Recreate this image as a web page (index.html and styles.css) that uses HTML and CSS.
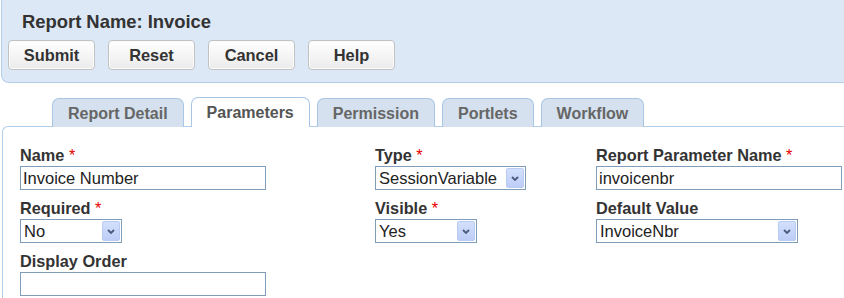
FILE: index.html
```html
<!DOCTYPE html>
<html>
<head>
<meta charset="utf-8">
<title>Report Name: Invoice</title>
<link rel="stylesheet" href="styles.css">
</head>
<body>
<div class="header">
  <h1 class="title">Report Name: Invoice</h1>
  <div class="actions">
    <button class="btn">Submit</button>
    <button class="btn">Reset</button>
    <button class="btn">Cancel</button>
    <button class="btn">Help</button>
  </div>
</div>
<div class="tabs">
  <div class="tab">Report Detail</div>
  <div class="tab active">Parameters</div>
  <div class="tab">Permission</div>
  <div class="tab">Portlets</div>
  <div class="tab">Workflow</div>
</div>
<div class="panel">
  <div class="form">
    <div class="field">
      <div class="label">Name <span class="req">*</span></div>
      <input class="text w246" type="text" value="Invoice Number">
    </div>
    <div class="field">
      <div class="label">Type <span class="req">*</span></div>
      <div class="select w151"><span class="select-value">SessionVariable</span><span class="select-arrow"><svg width="8" height="5" viewBox="0 0 8 5"><polyline points="1,1 4,4 7,1" fill="none" stroke="#4a5b7e" stroke-width="1.8"/></svg></span></div>
    </div>
    <div class="field">
      <div class="label">Report Parameter Name <span class="req">*</span></div>
      <input class="text w246" type="text" value="invoicenbr">
    </div>
    <div class="field">
      <div class="label">Required <span class="req">*</span></div>
      <div class="select w102"><span class="select-value">No</span><span class="select-arrow"><svg width="8" height="5" viewBox="0 0 8 5"><polyline points="1,1 4,4 7,1" fill="none" stroke="#4a5b7e" stroke-width="1.8"/></svg></span></div>
    </div>
    <div class="field">
      <div class="label">Visible <span class="req">*</span></div>
      <div class="select w102"><span class="select-value">Yes</span><span class="select-arrow"><svg width="8" height="5" viewBox="0 0 8 5"><polyline points="1,1 4,4 7,1" fill="none" stroke="#4a5b7e" stroke-width="1.8"/></svg></span></div>
    </div>
    <div class="field">
      <div class="label">Default Value</div>
      <div class="select w202"><span class="select-value">InvoiceNbr</span><span class="select-arrow"><svg width="8" height="5" viewBox="0 0 8 5"><polyline points="1,1 4,4 7,1" fill="none" stroke="#4a5b7e" stroke-width="1.8"/></svg></span></div>
    </div>
    <div class="field">
      <div class="label">Display Order</div>
      <input class="text w246" type="text" value="">
    </div>
  </div>
</div>
</body>
</html>
```

FILE: styles.css
```css
html, body {
  margin: 0;
  padding: 0;
  overflow: hidden;
  background: #ffffff;
}
body {
  font-family: "Liberation Sans", Arial, sans-serif;
  color: #333333;
}
.header {
  margin: -4px 0 0 1px;
  background: #dce8f5;
  border: 1px solid #b4cfec;
  border-right: none;
  border-radius: 6px 0 0 8px;
  padding: 14px 0 12px 0;
}
.title {
  margin: 0 0 7px 20px;
  font-size: 18.4px;
  line-height: 22px;
  font-weight: bold;
  color: #333333;
}
.actions {
  display: flex;
  gap: 13px;
  padding-left: 6px;
}
.btn {
  width: 87px;
  height: 30px;
  box-sizing: border-box;
  border: 1px solid #c2c2c2;
  border-radius: 4px;
  background: linear-gradient(#ffffff, #ebebeb);
  box-shadow: inset 0 0 0 1px #fbfbfb;
  font-family: "Liberation Sans", Arial, sans-serif;
  font-size: 16.4px;
  font-weight: bold;
  color: #333333;
  padding: 0;
}
.tabs {
  display: flex;
  align-items: flex-end;
  gap: 7px;
  margin-top: 14px;
  padding-left: 52px;
  position: relative;
  z-index: 1;
}
.tab {
  height: 29px;
  box-sizing: border-box;
  padding: 0 15px;
  border: 1px solid #a9c6e7;
  border-bottom: none;
  border-radius: 7px 7px 0 0;
  background: #d5e1ee;
  color: #666666;
  font-size: 16px;
  font-weight: bold;
  line-height: 29px;
  margin-bottom: -1px;
}
.tab.active {
  background: #ffffff;
  height: 30px;
  color: #555555;
}
.panel {
  margin-left: 2px;
  border: 1px solid #b0cdea;
  border-right: none;
  border-radius: 6px 0 0 0;
  padding: 19px 0 12px 17px;
}
.form {
  display: grid;
  grid-template-columns: 355px 221px 1fr;
  row-gap: 9px;
}
.label {
  font-size: 16.3px;
  line-height: 19px;
  font-weight: bold;
  color: #333333;
}
.req {
  color: #e60000;
  font-weight: normal;
}
.text, .select {
  display: block;
  margin-top: 1px;
  height: 24px;
  box-sizing: border-box;
  border: 1px solid #7f9db9;
  background: #ffffff;
  font-family: "Liberation Sans", Arial, sans-serif;
  font-size: 16.5px;
  color: #222222;
}
.text {
  padding: 0 2px;
  outline: none;
}
.select {
  display: flex;
  align-items: stretch;
}
.select-value {
  flex: 1;
  padding-left: 3px;
  line-height: 22px;
}
.select-arrow {
  width: 18px;
  margin: 1px;
  box-sizing: border-box;
  border: 1px solid #b9cbf3;
  border-radius: 2px;
  background: linear-gradient(#d3e0fc, #bccdf7);
  display: flex;
  align-items: center;
  justify-content: center;
}
.w246 { width: 246px; }
.w151 { width: 151px; }
.w102 { width: 102px; }
.w202 { width: 202px; }
```
